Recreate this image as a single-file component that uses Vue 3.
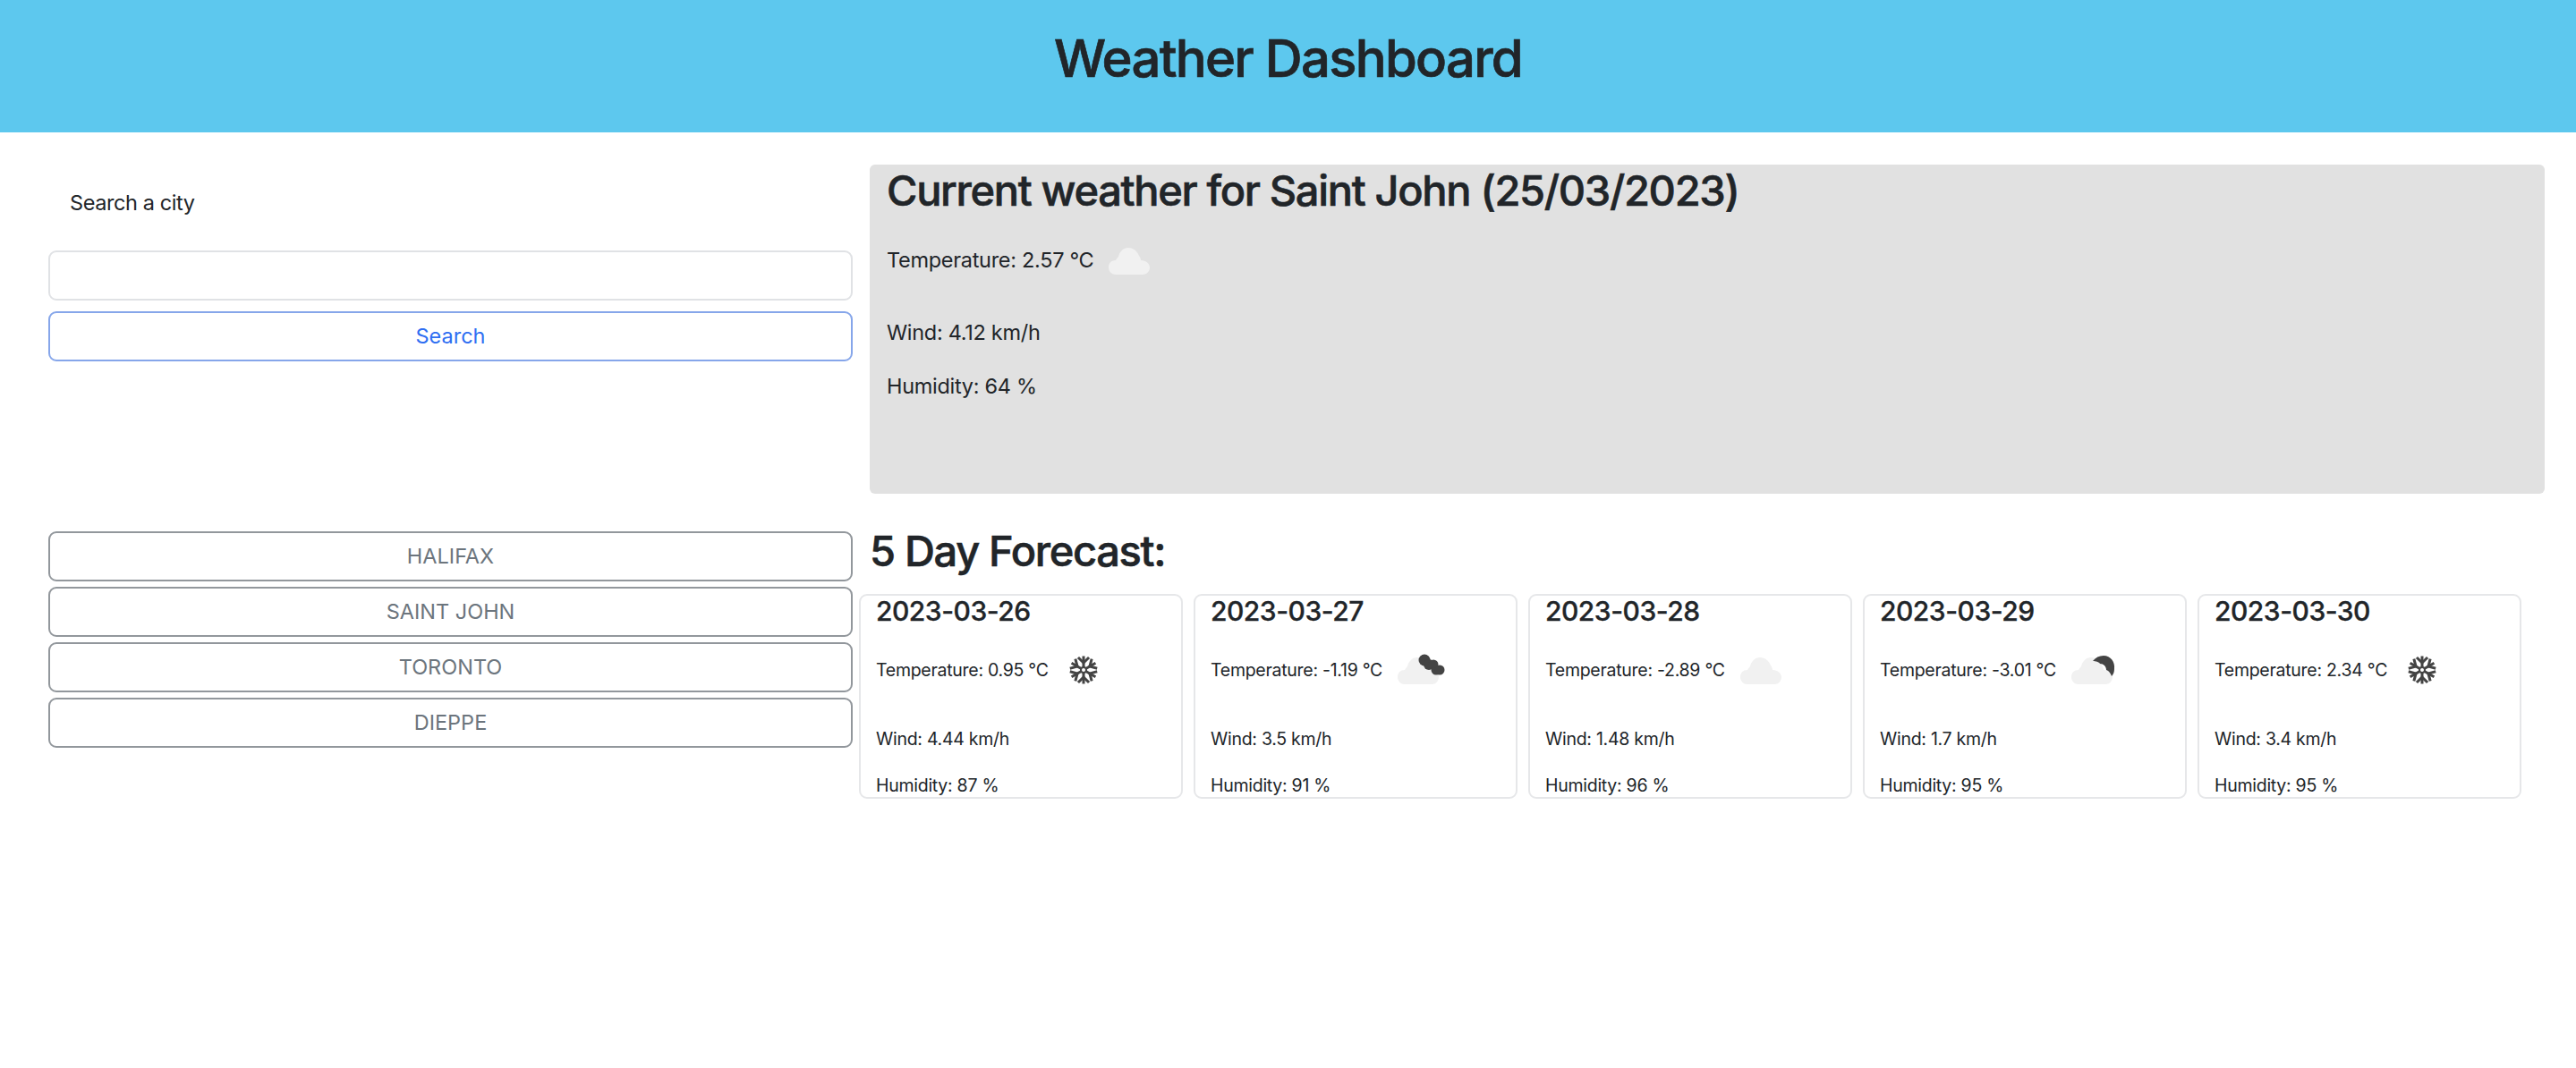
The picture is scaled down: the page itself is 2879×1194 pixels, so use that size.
<template>
  <div class="page">
    <header class="top">
      <h1>Weather Dashboard</h1>
    </header>

    <main class="layout">
      <section class="search">
        <label class="search-label" for="city">Search a city</label>
        <input id="city" class="city-input" type="text" />
        <button class="btn btn-blue">Search</button>
      </section>

      <section class="current">
        <h2>Current weather for Saint John (25/03/2023)</h2>
        <div class="temp-row">
          <span>Temperature: 2.57 °C</span>
          <svg class="icon" width="73" height="73" viewBox="0 0 73 73">
            <use href="#cloud-shape" />
          </svg>
        </div>
        <p class="wind">Wind: 4.12 km/h</p>
        <p class="humidity">Humidity: 64 %</p>
      </section>

      <section class="history">
        <button v-for="city in cities" :key="city" class="btn btn-gray">{{ city }}</button>
      </section>

      <section class="forecast">
        <h2 class="forecast-title">5 Day Forecast:</h2>
        <div class="cards">
          <article v-for="day in days" :key="day.date" class="card">
            <h4>{{ day.date }}</h4>
            <div class="temp-row">
              <span>Temperature: {{ day.temp }} °C</span>
              <svg class="icon" width="73" height="73" viewBox="0 0 73 73">
                <use v-if="day.icon !== 'snow'" href="#cloud-shape" />
                <g v-if="day.icon === 'broken'" fill="#444">
                  <circle cx="36" cy="26" r="6.5" />
                  <circle cx="41" cy="31" r="6" />
                  <circle cx="46" cy="31" r="5.5" />
                  <circle cx="49" cy="37" r="5.5" />
                  <circle cx="53" cy="37" r="5.5" />
                </g>
                <path
                  v-if="day.icon === 'few'"
                  fill="#444"
                  d="M30 27c3-4 7-6 12-6 8 0 13 7 12 15 0 3-1 6-3 8-1-3-3-6-6-7 0-4-3-7-7-7-1-2-5-3-8-3z"
                />
                <g v-if="day.icon === 'snow'" stroke="#444" stroke-width="3" fill="none" stroke-linecap="square">
                  <g v-for="a in arms" :key="a" :transform="`rotate(${a} 28 37)`">
                    <path d="M28 33V23" />
                    <path d="M23 24l5 5 5-5" />
                  </g>
                  <circle cx="28" cy="37" r="3" stroke-width="2" />
                </g>
              </svg>
            </div>
            <p class="wind">Wind: {{ day.wind }} km/h</p>
            <p class="humidity">Humidity: {{ day.humidity }} %</p>
          </article>
        </div>
      </section>
    </main>

    <svg class="defs" width="0" height="0">
      <defs>
        <path
          id="cloud-shape"
          fill="#f1f1f1"
          d="M14 53c-5 0-8-4-8-8 0-5 3-8 8-8 1-2 2-3 3-4 1-5 5-10 11-10 6 0 10 4 12 9 1 1 2 3 2 5 6 0 10 4 10 8 0 4-3 8-8 8z"
        />
      </defs>
    </svg>
  </div>
</template>

<script setup>
const cities = ['HALIFAX', 'SAINT JOHN', 'TORONTO', 'DIEPPE']
const arms = [0, 60, 120, 180, 240, 300]

const days = [
  { date: '2023-03-26', temp: '0.95', wind: '4.44', humidity: 87, icon: 'snow' },
  { date: '2023-03-27', temp: '-1.19', wind: '3.5', humidity: 91, icon: 'broken' },
  { date: '2023-03-28', temp: '-2.89', wind: '1.48', humidity: 96, icon: 'cloud' },
  { date: '2023-03-29', temp: '-3.01', wind: '1.7', humidity: 95, icon: 'few' },
  { date: '2023-03-30', temp: '2.34', wind: '3.4', humidity: 95, icon: 'snow' }
]
</script>

<style scoped>
.page {
  font-family: Inter, "Liberation Sans", sans-serif;
  font-size: 23.5px;
  line-height: 35px;
  letter-spacing: -0.3px;
  color: #212529;
  background: #fff;
  min-height: 1194px;
}
.top {
  height: 148px;
  background: #5dc8ee;
  display: flex;
  justify-content: center;
  align-items: center;
}
h1, h2, h4, p {
  margin: 0;
  font-weight: 500;
}
p {
  font-weight: 400;
}
h1 {
  font-size: 58px;
  line-height: 70px;
  margin-bottom: 18px;
  letter-spacing: -1.7px;
  -webkit-text-stroke: 0.7px #212529;
}
.layout {
  display: grid;
  grid-template-columns: 899px 1fr;
  column-gap: 19px;
  row-gap: 42px;
  padding: 36px 35px 0 54px;
}
.search {
  display: flex;
  flex-direction: column;
  padding-top: 25px;
}
.search-label {
  padding-left: 24px;
  margin-bottom: 36px;
  letter-spacing: -0.4px;
}
.city-input {
  height: 56px;
  box-sizing: border-box;
  border: 2px solid #e0e2e5;
  border-radius: 9px;
  background: #fff;
  margin-bottom: 12px;
}
.btn {
  height: 56px;
  box-sizing: border-box;
  background: #fff;
  border-radius: 9px;
  font: inherit;
  line-height: 35px;
  letter-spacing: 0;
  padding: 0 0 1px;
  text-align: center;
}
.btn-blue {
  color: #2e6ef2;
  border: 2px solid #86a6ea;
}
.btn-gray {
  color: #6c757d;
  border: 2px solid #92979c;
}
.current {
  height: 368px;
  box-sizing: border-box;
  background: #e1e1e1;
  border-radius: 6px;
  padding: 1px 19px 0;
}
h2 {
  font-size: 47px;
  line-height: 56px;
  letter-spacing: -1.33px;
  -webkit-text-stroke: 0.6px #212529;
}
.current .temp-row {
  margin-top: 13px;
}
.current .wind {
  margin-top: 27px;
}
.current .humidity {
  margin-top: 25px;
}
.temp-row {
  display: flex;
  align-items: center;
  height: 73px;
}
.icon {
  margin-left: 11px;
  flex: none;
}
.history {
  display: flex;
  flex-direction: column;
  gap: 6px;
}
.forecast-title {
  line-height: 44px;
  margin-bottom: 26px;
}
.cards {
  display: flex;
  gap: 12px;
  margin-left: -12px;
}
.card {
  width: 362px;
  height: 229px;
  box-sizing: border-box;
  border: 2px solid #e6e7e9;
  border-radius: 9px;
  padding: 0 17px;
  overflow: hidden;
  font-size: 19.5px;
  line-height: 30px;
  letter-spacing: -0.27px;
}
.card h4 {
  font-size: 30px;
  line-height: 35px;
  letter-spacing: -0.5px;
  -webkit-text-stroke: 0.3px #212529;
}
.card .temp-row {
  margin-top: 11px;
}
.card .wind {
  margin-top: 26px;
}
.card .humidity {
  margin-top: 22px;
}
.defs {
  position: absolute;
}
</style>
